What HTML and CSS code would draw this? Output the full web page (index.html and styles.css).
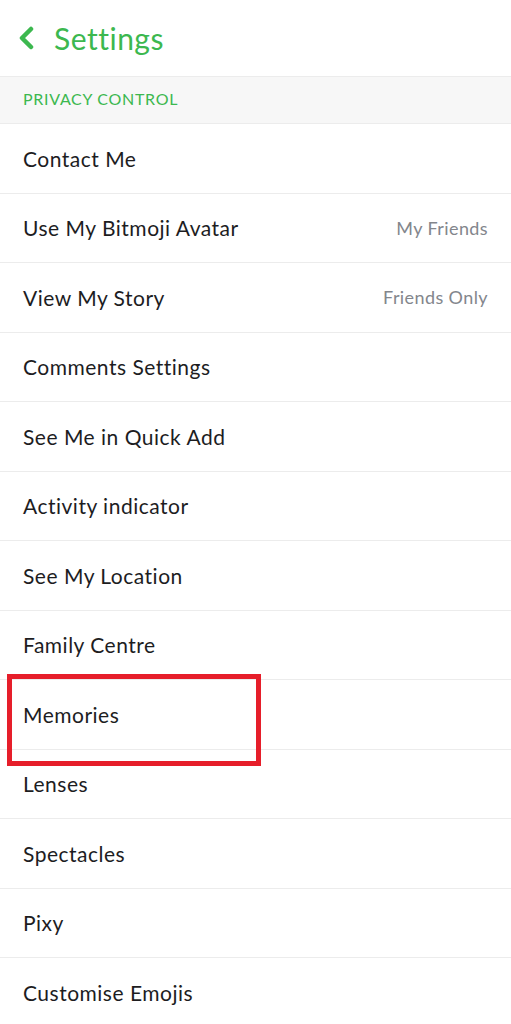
FILE: index.html
```html
<!DOCTYPE html>
<html lang="en">
<head>
    <meta charset="UTF-8">
    <meta name="viewport" content="width=device-width, initial-scale=1.0">
    <title>Settings</title>
    <link rel="stylesheet" href="styles.css">
</head>
<body>
    <header class="top-bar">
        <svg class="back-icon" width="18" height="24" viewBox="0 0 18 24">
            <path d="M14 3 L5 12 L14 21" fill="none" stroke="#3cb84f" stroke-width="4.5" stroke-linecap="round" stroke-linejoin="round"/>
        </svg>
        <h1>Settings</h1>
    </header>

    <div class="section-title">PRIVACY CONTROL</div>

    <ul class="settings-list">
        <li class="row"><span>Contact Me</span></li>
        <li class="row"><span>Use My Bitmoji Avatar</span><span class="value">My Friends</span></li>
        <li class="row"><span>View My Story</span><span class="value">Friends Only</span></li>
        <li class="row"><span>Comments Settings</span></li>
        <li class="row"><span>See Me in Quick Add</span></li>
        <li class="row"><span>Activity indicator</span></li>
        <li class="row"><span>See My Location</span></li>
        <li class="row"><span>Family Centre</span></li>
        <li class="row highlighted"><span>Memories</span></li>
        <li class="row"><span>Lenses</span></li>
        <li class="row"><span>Spectacles</span></li>
        <li class="row"><span>Pixy</span></li>
        <li class="row"><span>Customise Emojis</span></li>
    </ul>
</body>
</html>
```

FILE: styles.css
```css
*, *::before, *::after {
    margin: 0;
    padding: 0;
    box-sizing: border-box;
}

body {
    font-family: 'Lato', 'Noto Sans', sans-serif;
    background: #fff;
    color: #1d1d1f;
    overflow: hidden;
}

.top-bar {
    height: 76px;
    display: flex;
    align-items: center;
    padding-left: 17px;
    gap: 19px;
}

.top-bar h1 {
    font-size: 30px;
    font-weight: 400;
    color: #3cb84f;
    letter-spacing: 0.5px;
}

.section-title {
    height: 48px;
    display: flex;
    align-items: center;
    padding: 0 0 4px 23px;
    background: #f7f7f7;
    border-top: 1px solid #ececec;
    border-bottom: 1px solid #ececec;
    color: #3cb84f;
    font-size: 16px;
    letter-spacing: 0.7px;
}

.settings-list {
    list-style: none;
}

.row {
    position: relative;
    height: 69.5px;
    display: flex;
    align-items: center;
    justify-content: space-between;
    padding: 0 23px;
    border-bottom: 1px solid #ececec;
    font-size: 21px;
    letter-spacing: 0.5px;
}

.value {
    color: #83868c;
    font-size: 18px;
    letter-spacing: 0.4px;
}

.highlighted::after {
    content: '';
    position: absolute;
    left: 7px;
    top: -6px;
    width: 254px;
    height: 92px;
    border: 5px solid #e61e2a;
}
```
